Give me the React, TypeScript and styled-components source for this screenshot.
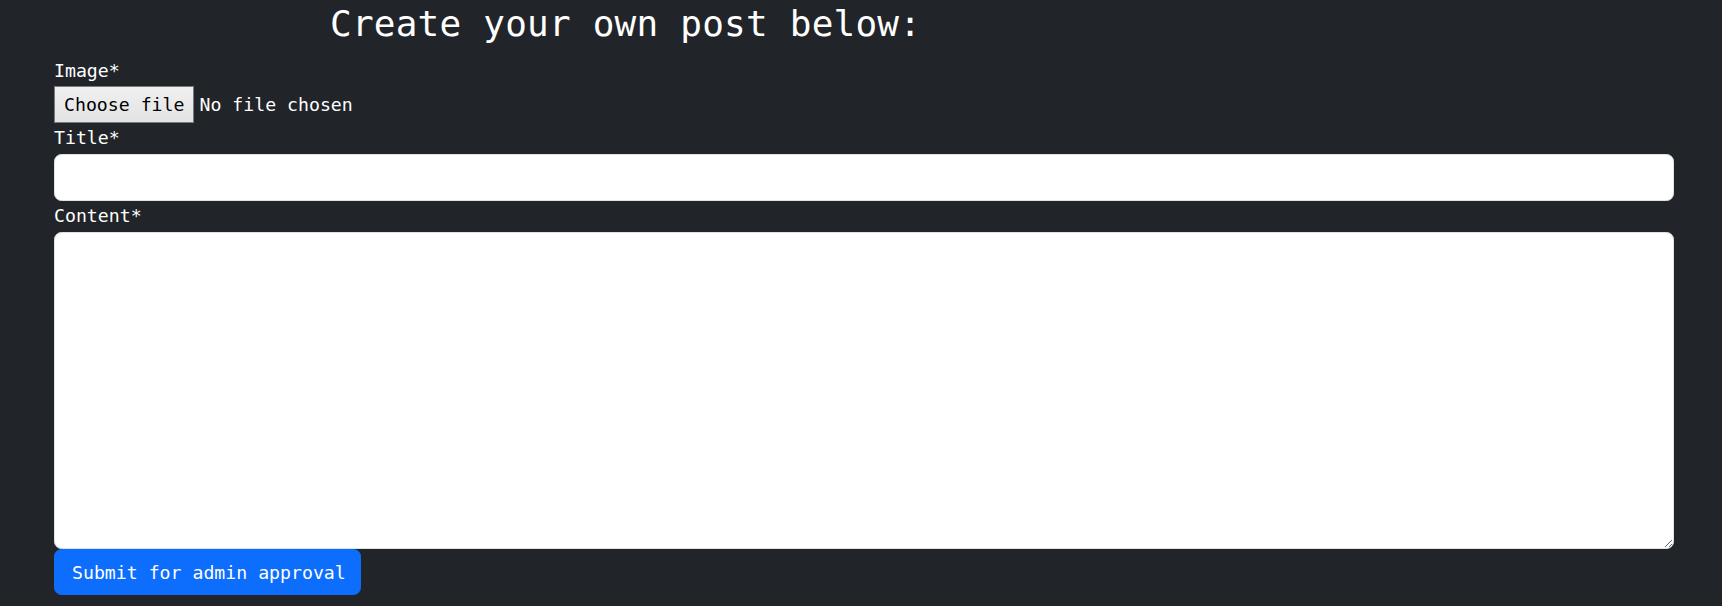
import React, { FC } from 'react';

import styled, { createGlobalStyle } from 'styled-components';

const MONO = '"DejaVu Sans Mono", "Liberation Mono", monospace';

const GlobalStyle = createGlobalStyle`
  html, body {
    margin: 0;
    padding: 0;
    background: #212529;
  }
  body {
    font-family: ${MONO};
    color: #ffffff;
  }
  * {
    box-sizing: border-box;
  }
`;

const StyledPage = styled.main`
  width: 1722px;
  height: 606px;
  padding: 0 48px 0 54px;
  background: #212529;
  overflow: hidden;
`;

const StyledHeading = styled.h1`
  margin: 0 0 8px;
  padding-left: 276px;
  font-family: ${MONO};
  font-size: 36px;
  font-weight: 400;
  line-height: 48px;
  letter-spacing: 0.22px;
  color: #ffffff;
`;

const StyledForm = styled.form`
  display: flex;
  flex-direction: column;
`;

const StyledLabel = styled.label`
  display: block;
  height: 30px;
  font-size: 18.2px;
  line-height: 30px;
  color: #ffffff;
`;

const StyledFileRow = styled.div`
  display: flex;
  align-items: center;
  gap: 5px;
  height: 37px;
`;

const StyledFileButton = styled.span`
  display: flex;
  align-items: center;
  height: 37px;
  padding: 0 9px;
  border: 1px solid #7a7a7a;
  background: linear-gradient(#f0f0f0, #e3e3e3);
  color: #000000;
  font-size: 18.2px;
`;

const StyledFileText = styled.span`
  font-size: 18.2px;
  color: #ffffff;
`;

const StyledInput = styled.input`
  display: block;
  width: 100%;
  height: 47px;
  margin-top: 1px;
  padding: 7px 15px;
  border: 1px solid #dee2e6;
  border-radius: 7.5px;
  background: #ffffff;
  font-family: ${MONO};
  font-size: 18.2px;
  outline: none;
`;

const StyledTextarea = styled.textarea`
  display: block;
  width: 100%;
  height: 317px;
  margin-top: 1px;
  padding: 7px 15px;
  border: 1px solid #dee2e6;
  border-radius: 7.5px;
  background: #ffffff;
  font-family: ${MONO};
  font-size: 18.2px;
  outline: none;
  resize: vertical;
`;

const StyledSubmit = styled.button`
  align-self: flex-start;
  width: 307px;
  height: 46px;
  padding: 0 17px;
  border: 1px solid #0d6efd;
  border-radius: 7.5px;
  background: #0d6efd;
  color: #ffffff;
  font-family: ${MONO};
  font-size: 18.2px;
  text-align: left;
  white-space: nowrap;
  cursor: pointer;
`;

const App: FC = () => (
  <>
    <GlobalStyle />
    <StyledPage>
      <StyledHeading>Create your own post below:</StyledHeading>
      <StyledForm onSubmit={e => e.preventDefault()}>
        <StyledLabel htmlFor="image">Image*</StyledLabel>
        <StyledFileRow id="image">
          <StyledFileButton>Choose file</StyledFileButton>
          <StyledFileText>No file chosen</StyledFileText>
        </StyledFileRow>
        <StyledLabel htmlFor="title">Title*</StyledLabel>
        <StyledInput id="title" type="text" />
        <StyledLabel htmlFor="content">Content*</StyledLabel>
        <StyledTextarea id="content" />
        <StyledSubmit type="submit">Submit for admin approval</StyledSubmit>
      </StyledForm>
    </StyledPage>
  </>
);

export default App;
